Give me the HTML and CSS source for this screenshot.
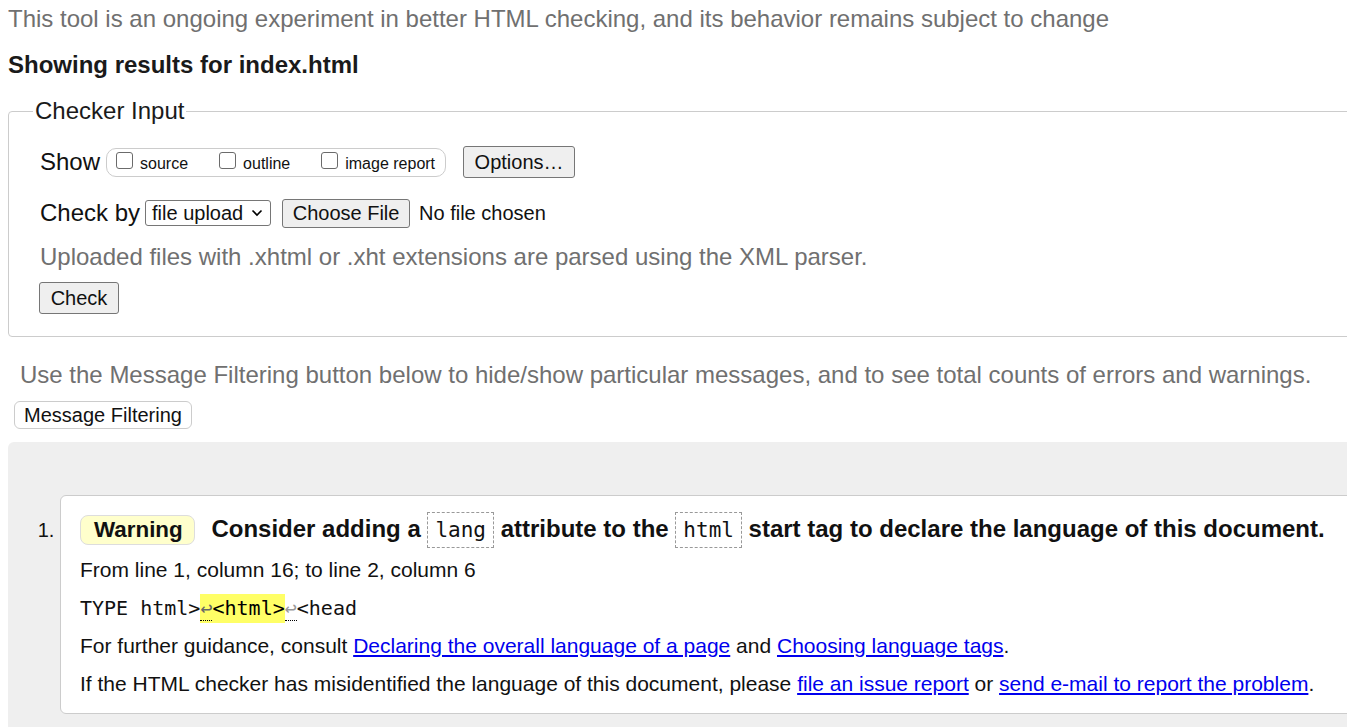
FILE: index.html
```html
<!DOCTYPE html>
<html>
<head>
<meta charset="utf-8">
<title>Nu Html Checker</title>
<link rel="stylesheet" href="styles.css">
</head>
<body>
<div class="page">
  <p class="intro">This tool is an ongoing experiment in better HTML checking, and its behavior remains subject to change</p>
  <h2 class="showing">Showing results for index.html</h2>
  <fieldset class="checker">
    <legend>Checker Input</legend>
    <div class="row">
      <span class="lbl">Show</span>
      <span class="showgroup">
        <label class="opt"><span class="cb"></span>source</label>
        <label class="opt"><span class="cb"></span>outline</label>
        <label class="opt"><span class="cb"></span>image report</label>
      </span>
      <button class="btn btn-options">Options…</button>
    </div>
    <div class="row row-check">
      <span class="lbl lbl-by">Check by</span>
      <span class="select">file upload<svg class="chev" width="12" height="8" viewBox="0 0 12 8"><path d="M1.5 1.5 L6 6 L10.5 1.5" fill="none" stroke="#000" stroke-width="1.6"/></svg></span>
      <button class="btn btn-file">Choose File</button>
      <span class="nofile">No file chosen</span>
    </div>
    <p class="hint">Uploaded files with .xhtml or .xht extensions are parsed using the XML parser.</p>
    <button class="btn btn-check">Check</button>
  </fieldset>
  <p class="filter-note">Use the Message Filtering button below to hide/show particular messages, and to see total counts of errors and warnings.</p>
  <button class="btn-filter">Message Filtering</button>
  <div class="results">
    <ol class="messages">
      <li class="msg">
        <p class="msg-title"><span class="badge">Warning</span> <span>Consider adding a <code class="tag">lang</code> attribute to the <code class="tag">html</code> start tag to declare the language of this document.</span></p>
        <p class="loc">From line 1, column 16; to line 2, column 6</p>
        <p class="extract"><code>TYPE html&gt;<mark><b class="lf">↩</b>&lt;html&gt;</mark><b class="lf lf-out">↩</b>&lt;head</code></p>
        <p class="info">For further guidance, consult <a href="#">Declaring the overall language of a page</a> and <a href="#">Choosing language tags</a>.</p>
        <p class="info">If the HTML checker has misidentified the language of this document, please <a href="#">file an issue report</a> or <a href="#">send e-mail to report the problem</a>.</p>
      </li>
    </ol>
  </div>
</div>
</body>
</html>
```
FILE: styles.css
```css
html, body {
  overflow: hidden;
}
body {
  margin: 5px 0 0 8px;
  font-family: "Liberation Sans", Arial, sans-serif;
  color: #111;
  background: #fff;
}
.page {
  height: calc(100vh - 5px);
  overflow: hidden;
}
.intro {
  margin: 0;
  font-size: 24px;
  line-height: 28px;
  color: #707070;
  white-space: nowrap;
}
.showing {
  margin: 17px 0 0;
  font-size: 24px;
  line-height: 30px;
  font-weight: bold;
  color: #1a1a1a;
}
.checker {
  margin: 18px -40px 0 0;
  padding: 22px 30px 22px 31px;
  border: 1px solid #ccc;
  border-radius: 4px;
}
.checker legend {
  font-size: 24px;
  line-height: 26px;
  padding: 0 2px;
  margin-left: -7px;
  color: #1a1a1a;
}
.row {
  display: flex;
  align-items: center;
  font-size: 24px;
  color: #111;
  height: 32px;
}
.lbl {
  margin-right: 6px;
}
.lbl-by {
  margin-right: 5px;
}
.showgroup {
  display: inline-flex;
  align-items: center;
  gap: 31px;
  border: 1px solid #ccc;
  border-radius: 10px;
  padding: 0 10px 0 9px;
  height: 27px;
  margin-right: 16px;
}
.opt {
  display: inline-flex;
  align-items: center;
  font-size: 16px;
  color: #111;
  padding-top: 4px;
  white-space: nowrap;
}
.cb {
  box-sizing: border-box;
  width: 17px;
  height: 17px;
  border: 1px solid #6b6b6b;
  border-radius: 3px;
  margin-right: 7px;
  margin-top: -8px;
  background: #fff;
}
.btn {
  font-family: "Liberation Sans", Arial, sans-serif;
  font-size: 20px;
  color: #111;
  background: #efefef;
  border: 1px solid #767676;
  border-radius: 3px;
  padding: 0;
  height: 32px;
  white-space: nowrap;
}
.btn-options {
  width: 112px;
  margin-left: 1px;
}
.row-check {
  margin-top: 19px;
}
.select {
  box-sizing: border-box;
  display: inline-flex;
  align-items: center;
  justify-content: space-between;
  width: 126px;
  font-size: 20px;
  height: 26px;
  padding: 0 7px 0 6px;
  border: 1px solid #767676;
  border-radius: 3px;
  margin-right: 11px;
  white-space: nowrap;
}
.btn-file {
  height: 29px;
  width: 128px;
}
.nofile {
  font-size: 20px;
  margin-left: 9px;
  white-space: nowrap;
}
.hint {
  margin: 13px 0 0;
  font-size: 24px;
  line-height: 30px;
  color: #707070;
}
.btn-check {
  display: block;
  margin: 10px 0 0 -1px;
  height: 32px;
  width: 80px;
}
.filter-note {
  margin: 23px 0 0 12px;
  font-size: 24px;
  line-height: 30px;
  color: #707070;
  white-space: nowrap;
}
.btn-filter {
  display: block;
  margin: 11px 0 0 6px;
  font-family: "Liberation Sans", Arial, sans-serif;
  font-size: 20px;
  color: #111;
  background: #fff;
  border: 1px solid #ccc;
  border-radius: 6px;
  padding: 0;
  height: 28px;
  width: 178px;
  white-space: nowrap;
}
.results {
  margin: 13px -60px 0 0;
  min-height: 400px;
  background: #efefef;
  border-radius: 6px 0 0 0;
  padding: 53px 0 40px 52px;
}
.messages {
  margin: 0;
  padding: 0;
}
.msg {
  background: #fff;
  border: 1px solid #ccc;
  border-radius: 6px;
  padding: 13px 20px 14px 19px;
  font-size: 21px;
  color: #111;
}
.msg::marker {
  font-size: 20px;
}
.msg-title {
  margin: 0;
  font-size: 24px;
  font-weight: bold;
  line-height: 40px;
  white-space: nowrap;
}
.badge {
  display: inline-block;
  font-size: 22.4px;
  background: #ffffcc;
  border: 1px solid #ddd;
  border-radius: 8px;
  padding: 0 11px 0 13px;
  line-height: 28px;
  margin-right: 10px;
}
.tag {
  font-family: "DejaVu Sans Mono", monospace;
  font-weight: normal;
  font-size: 21px;
  border: 1px dashed #999;
  padding: 5px 7px;
}
.loc {
  margin: 5px 0 0;
  line-height: 30px;
}
.extract {
  margin: 8px 0 0;
  line-height: 30px;
}
.extract code {
  font-family: "DejaVu Sans Mono", monospace;
  font-size: 20px;
}
mark {
  background: #ffff66;
  padding: 2px 0 3px;
}
.lf {
  font-weight: normal;
  color: #666;
  border-bottom: 1px dotted #000;
}
.lf-out {
  color: #999;
}
.info {
  margin: 8px 0 0;
  line-height: 30px;
  white-space: nowrap;
}
.info a {
  color: #0000ee;
}
```
